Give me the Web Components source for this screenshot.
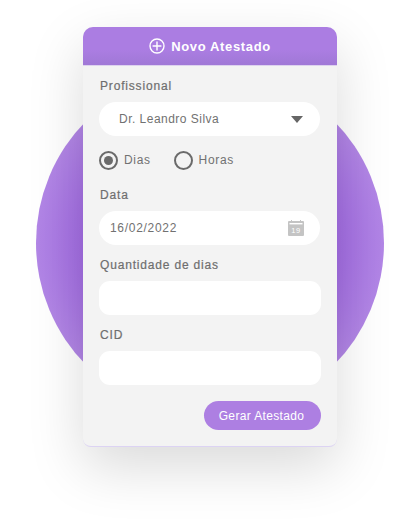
<!DOCTYPE html>
<html lang="pt-BR">
<head>
<meta charset="utf-8">
<title>Novo Atestado</title>
<style>
  html, body { margin: 0; background: #fff; overflow: hidden; }
  body { font-family: "Liberation Sans", Arial, sans-serif; color: #6b6b6b; }
</style>
</head>
<body>
<atestado-stage>
  <atestado-card title-text="Novo Atestado">
    <form-field label="Profissional">
      <pill-select value="Dr. Leandro Silva"></pill-select>
    </form-field>
    <radio-group>
      <radio-option checked>Dias</radio-option>
      <radio-option>Horas</radio-option>
    </radio-group>
    <form-field label="Data">
      <date-input value="16/02/2022"></date-input>
    </form-field>
    <form-field label="Quantidade de dias">
      <text-box></text-box>
    </form-field>
    <form-field label="CID">
      <text-box></text-box>
    </form-field>
    <action-button>Gerar Atestado</action-button>
  </atestado-card>
</atestado-stage>

<script>
class AtestadoStage extends HTMLElement {
  constructor() {
    super();
    this.attachShadow({ mode: "open" });
    this.shadowRoot.innerHTML = `
      <style>
        :host { display: grid; width: 404px; height: 532px; overflow: hidden; }
        .circle {
          grid-area: 1 / 1;
          width: 348px;
          height: 348px;
          margin: 69px 0 0 36px;
          border-radius: 50%;
          background: radial-gradient(circle closest-side, #9058dc 50%, #a36de3 73%, #b286e6 100%);
        }
        .front {
          grid-area: 1 / 1;
          padding: 27px 0 0 83px;
        }
      </style>
      <div class="circle"></div>
      <div class="front"><slot></slot></div>
    `;
  }
}

class AtestadoCard extends HTMLElement {
  constructor() {
    super();
    this.attachShadow({ mode: "open" });
    this.shadowRoot.innerHTML = `
      <style>
        :host {
          display: block;
          width: 254px;
          height: 420px;
          box-sizing: border-box;
          background: #f3f3f3;
          border-radius: 10px 10px 8px 8px;
          border-bottom: 1px solid #dcd3f3;
          box-shadow: 0 20px 55px rgba(0, 0, 0, 0.15);
        }
        header {
          height: 38px;
          display: flex;
          align-items: center;
          justify-content: center;
          gap: 6px;
          border-radius: 10px 10px 0 0;
          background: linear-gradient(#ab7de2 60%, #a078d6);
          box-shadow: 0 1px 0 #ddd2ee;
          color: #fff;
          font-size: 13px;
          font-weight: 700;
          letter-spacing: 0.65px;
        }
        svg { width: 16px; height: 16px; display: block; }
        .body { padding: 12px 16px 0; display: block; }
      </style>
      <header>
        <svg viewBox="0 0 16 16" fill="none" stroke="#fff" stroke-width="1.4">
          <circle cx="8" cy="8" r="7"/>
          <path d="M8 3.6v8.8M3.6 8h8.8"/>
        </svg>
        <span id="title"></span>
      </header>
      <div class="body"><slot></slot></div>
    `;
  }

  connectedCallback() {
    this.shadowRoot.querySelector("#title").textContent = this.getAttribute("title-text");
  }
}

class FormField extends HTMLElement {
  constructor() {
    super();
    this.attachShadow({ mode: "open" });
    this.shadowRoot.innerHTML = `
      <style>
        :host { display: block; margin-bottom: 11px; }
        label {
          display: block;
          height: 15px;
          padding: 1px 0 0 1px;
          line-height: 16px;
          margin-bottom: 9px;
          font-size: 12px;
          letter-spacing: 0.82px;
          color: #6e6e6e;
          -webkit-text-stroke: 0.2px #6e6e6e;
        }
      </style>
      <label></label>
      <slot></slot>
    `;
  }

  connectedCallback() {
    this.shadowRoot.querySelector("label").textContent = this.getAttribute("label");
  }
}

class PillSelect extends HTMLElement {
  constructor() {
    super();
    this.attachShadow({ mode: "open" });
    this.shadowRoot.innerHTML = `
      <style>
        :host {
          display: flex;
          align-items: center;
          justify-content: space-between;
          width: 221px;
          height: 34px;
          padding: 0 17px 0 20px;
          box-sizing: border-box;
          background: #fff;
          border-radius: 17px;
          font-size: 12px;
          letter-spacing: 0.48px;
          color: #717171;
        }
        svg { width: 12px; height: 7px; display: block; }
      </style>
      <span id="value"></span>
      <svg viewBox="0 0 12 7"><path d="M0 0h12L6 7z" fill="#666"/></svg>
    `;
  }

  connectedCallback() {
    this.shadowRoot.querySelector("#value").textContent = this.getAttribute("value");
  }
}

class RadioGroup extends HTMLElement {
  constructor() {
    super();
    this.attachShadow({ mode: "open" });
    this.shadowRoot.innerHTML = `
      <style>
        :host {
          display: flex;
          gap: 23px;
          height: 20px;
          margin: 14px 0 16px;
        }
      </style>
      <slot></slot>
    `;
  }
}

class RadioOption extends HTMLElement {
  constructor() {
    super();
    this.attachShadow({ mode: "open" });
    this.shadowRoot.innerHTML = `
      <style>
        :host {
          display: flex;
          align-items: center;
          gap: 6px;
          font-size: 12px;
          letter-spacing: 0.65px;
          color: #717171;
        }
        .ring {
          width: 19px;
          height: 19px;
          box-sizing: border-box;
          border: 2px solid #6a6a6a;
          border-radius: 50%;
          display: flex;
          align-items: center;
          justify-content: center;
        }
        :host([checked]) .ring::after {
          content: "";
          width: 9px;
          height: 9px;
          border-radius: 50%;
          background: #6a6a6a;
        }
      </style>
      <span class="ring"></span>
      <span><slot></slot></span>
    `;
  }
}

class DateInput extends HTMLElement {
  constructor() {
    super();
    this.attachShadow({ mode: "open" });
    this.shadowRoot.innerHTML = `
      <style>
        :host {
          display: flex;
          align-items: center;
          justify-content: space-between;
          width: 221px;
          height: 34px;
          padding: 0 16px 0 11px;
          box-sizing: border-box;
          background: #fff;
          border-radius: 17px;
          font-size: 12px;
          letter-spacing: 0.7px;
          color: #717171;
        }
        svg { width: 16px; height: 16px; display: block; }
        text { font: 400 7.5px "Liberation Sans", Arial, sans-serif; fill: #fff; }
      </style>
      <span id="value"></span>
      <svg viewBox="0 0 16 16">
        <path d="M3 0h1v1h8V0h1v1h2a1 1 0 0 1 1 1v13a1 1 0 0 1-1 1H1a1 1 0 0 1-1-1V2a1 1 0 0 1 1-1h2z" fill="#c4c4c4"/>
        <rect x="1.5" y="3" width="13" height="1.4" fill="#fff"/>
        <text x="8" y="13" text-anchor="middle">19</text>
      </svg>
    `;
  }

  connectedCallback() {
    this.shadowRoot.querySelector("#value").textContent = this.getAttribute("value");
  }
}

class TextBox extends HTMLElement {
  constructor() {
    super();
    this.attachShadow({ mode: "open" });
    this.shadowRoot.innerHTML = `
      <style>
        :host {
          display: block;
          width: 222px;
          height: 34px;
          background: #fff;
          border-radius: 11px;
        }
      </style>
    `;
  }
}

class ActionButton extends HTMLElement {
  constructor() {
    super();
    this.attachShadow({ mode: "open" });
    this.shadowRoot.innerHTML = `
      <style>
        :host {
          display: flex;
          align-items: center;
          justify-content: center;
          width: 117px;
          height: 29px;
          box-sizing: border-box;
          padding-right: 2px;
          margin: 16px 0 0 105px;
          background: #ad7fe2;
          border-radius: 14.5px;
          color: #fff;
          font-size: 12px;
          letter-spacing: 0.35px;
        }
      </style>
      <slot></slot>
    `;
  }
}

customElements.define("atestado-stage", AtestadoStage);
customElements.define("atestado-card", AtestadoCard);
customElements.define("form-field", FormField);
customElements.define("pill-select", PillSelect);
customElements.define("radio-group", RadioGroup);
customElements.define("radio-option", RadioOption);
customElements.define("date-input", DateInput);
customElements.define("text-box", TextBox);
customElements.define("action-button", ActionButton);
</script>
</body>
</html>
